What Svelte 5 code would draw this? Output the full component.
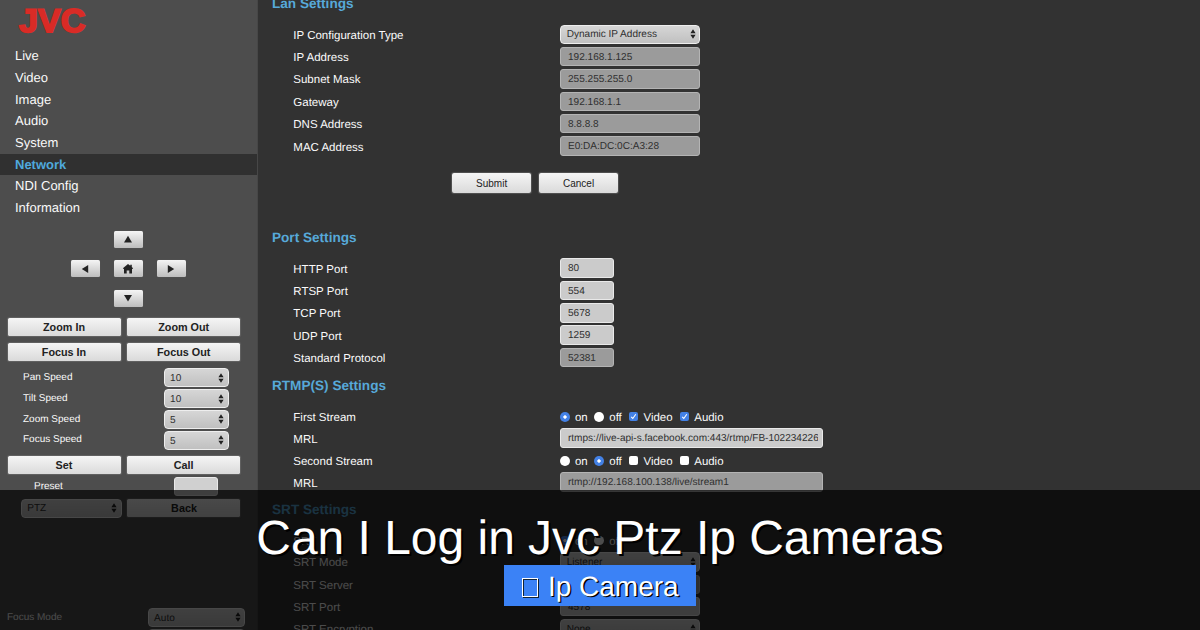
<script>
  const nav = ['Live', 'Video', 'Image', 'Audio', 'System', 'Network', 'NDI Config', 'Information'];
  const speeds = [['Pan Speed', '10'], ['Tilt Speed', '10'], ['Zoom Speed', '5'], ['Focus Speed', '5']];
  const lan = [
    ['IP Address', '192.168.1.125'],
    ['Subnet Mask', '255.255.255.0'],
    ['Gateway', '192.168.1.1'],
    ['DNS Address', '8.8.8.8'],
    ['MAC Address', 'E0:DA:DC:0C:A3:28']
  ];
  const ports = [['HTTP Port', '80'], ['RTSP Port', '554'], ['TCP Port', '5678'], ['UDP Port', '1259'], ['Standard Protocol', '52381']];
  const streams = [
    { name: 'First Stream', on: true, url: 'rtmps://live-api-s.facebook.com:443/rtmp/FB-1022342267' },
    { name: 'Second Stream', on: false, url: 'rtmp://192.168.100.138/live/stream1' }
  ];
</script>

{#snippet select(text, cls)}
  <div class="field select {cls}">
    <span>{text}</span>
    <svg width="6" height="10" viewBox="0 0 6 10"><path d="M3 .2 5.6 4.2H.4zM3 9.8.4 5.8h5.2z" fill="#222" /></svg>
  </div>
{/snippet}

{#snippet radio(on)}
  <i class="radio" class:on></i>
{/snippet}

{#snippet check(on)}
  <i class="check" class:on>
    {#if on}<svg width="9" height="9" viewBox="0 0 9 9"><path d="M2.2 4.8 3.8 6.5 6.8 2.3" fill="none" stroke="#fff" stroke-width="1.1" /></svg>{/if}
  </i>
{/snippet}

<div class="page">
  <aside>
    <div class="logo">
      <svg width="90" height="45" viewBox="0 0 90 45">
        <text x="19" y="32.4" textLength="66.5" lengthAdjust="spacingAndGlyphs">JVC</text>
      </svg>
    </div>
    <nav>
      {#each nav as item}
        <div class="item" class:active={item === 'Network'}>{item}</div>
      {/each}
    </nav>

    <div class="pad">
      <button class="up"><svg viewBox="0 0 10 8"><path d="M5 .8 9 7.4H1z" /></svg></button>
      <button class="left"><svg viewBox="0 0 10 8"><path d="M1.8 4 8.2 0v8z" /></svg></button>
      <button class="home"><svg class="house" viewBox="0 0 12 11"><path d="M6 .9 8.3 2.8V1.7h1.5v2.4l1.3 1.2-.6.7-.5-.3v4.9H7.3V7.4H4.7v3.2H2V5.7l-.5.3-.6-.7z" /></svg></button>
      <button class="right"><svg viewBox="0 0 10 8"><path d="M8.2 4 1.8 0v8z" /></svg></button>
      <button class="down"><svg viewBox="0 0 10 8"><path d="M5 7.6 9 1H1z" /></svg></button>
    </div>

    <div class="pairs">
      <button>Zoom In</button><button>Zoom Out</button>
      <button>Focus In</button><button>Focus Out</button>
    </div>

    <div class="speeds">
      {#each speeds as [label, value]}
        <div class="speed"><span>{label}</span>{@render select(value, 'small')}</div>
      {/each}
    </div>

    <div class="pairs set"><button>Set</button><button>Call</button></div>
    <div class="preset"><span>Preset</span><div class="field"></div></div>
    <div class="back">{@render select('PTZ', 'ptz')}<button>Back</button></div>
    <div class="mode"><span>Focus Mode</span>{@render select('Auto', 'auto')}</div>
    <div class="mode next"><span></span>{@render select('', 'auto')}</div>
  </aside>

  <main>
    <h2 class="lan">Lan Settings</h2>
    <div class="row"><label>IP Configuration Type</label>{@render select('Dynamic IP Address', 'wide')}</div>
    {#each lan as [label, value]}
      <div class="row"><label>{label}</label><div class="field wide off">{value}</div></div>
    {/each}
    <div class="actions"><button>Submit</button><button>Cancel</button></div>

    <h2 class="port">Port Settings</h2>
    {#each ports as [label, value], i}
      <div class="row"><label>{label}</label><div class="field short" class:off={i === 4}>{value}</div></div>
    {/each}

    <h2 class="rtmp">RTMP(S) Settings</h2>
    {#each streams as s}
      <div class="row stream">
        <label>{s.name}</label>
        <div class="opts">
          {@render radio(s.on)}<span class="on-text">on</span>
          {@render radio(!s.on)}<span class="off-text">off</span>
          {@render check(s.on)}<span class="video-text">Video</span>
          {@render check(s.on)}<span>Audio</span>
        </div>
      </div>
      <div class="row mrl"><label>MRL</label><div class="field url" class:off={!s.on}><span>{s.url}</span></div></div>
    {/each}

    <h2 class="srt">SRT Settings</h2>
    <div class="row srt-on">
      <label>SRT</label>
      <div class="opts">{@render radio(true)}<span class="on-text">on</span>{@render radio(false)}<span>off</span></div>
    </div>
    <div class="row"><label>SRT Mode</label>{@render select('Listener', 'wide')}</div>
    <div class="row"><label>SRT Server</label><div class="field wide off"></div></div>
    <div class="row"><label>SRT Port</label><div class="field wide">4578</div></div>
    <div class="row"><label>SRT Encryption</label>{@render select('None', 'wide')}</div>
  </main>

  <section class="overlay">
    <h1>Can I Log in Jvc Ptz Ip Cameras</h1>
    <div class="badge"><i></i><span>Ip Camera</span></div>
  </section>
</div>

<style>
  :global(body) { background: #323232; overflow: hidden; }
  .page {
    position: relative; display: flex; width: 1200px; height: 630px; overflow: hidden;
    background: #323232; color: #fafafa; font-family: "Liberation Sans", Arial, sans-serif;
    text-rendering: geometricPrecision;
  }
  .page * { box-sizing: border-box; }
  aside { width: 257.5px; height: 630px; flex: none; background: #4d4d4d; border-right: 1px solid #474747; overflow: hidden; }
  .logo { height: 45.4px; }
  .logo svg { display: block; }
  .logo text { font: bold 33px "Liberation Sans", Arial, sans-serif; fill: #d92b26; stroke: #d92b26; stroke-width: 1.8px; }
  .item { height: 21.65px; padding-left: 15px; font-size: 13px; line-height: 22px; }
  .item.active { background: #303030; color: #4fa9dd; font-weight: bold; margin-right: -1px; }

  button {
    display: flex; align-items: center; justify-content: center; padding: 0; border: 0; border-radius: 1.5px;
    background: linear-gradient(#f5f5f5, #dadada); color: #222; font-family: inherit;
    box-shadow: 0 0 1px 1px rgba(125, 125, 125, .45);
  }
  .pad {
    display: grid; grid-template-columns: repeat(3, 28.6px); grid-template-rows: repeat(3, 17px);
    gap: 12.5px 14.5px; margin: 12.4px 0 0 71px;
  }
  .pad button { background: linear-gradient(#f5f5f5, #bdbdbd); box-shadow: 0 0 1px rgba(125, 125, 125, .5); }
  .pad svg { width: 10px; height: 8px; fill: #222; }
  .pad .house { width: 12px; height: 11px; }
  .up, .down { grid-column: 2; }
  .left { grid-column: 1; }
  .pairs { display: grid; grid-template-columns: 113px 113px; gap: 7px 6.7px; margin: 11.5px 0 0 7.5px; }
  .pairs button, .back button { height: 18px; font-size: 10.8px; font-weight: bold; }

  .field {
    height: 19.4px; padding: 0 6.9px; border: 1px solid #e9e9e9; border-radius: 3px; background: #cbcbcb;
    color: #303030; font-size: 10.05px; line-height: 19.6px; white-space: nowrap; overflow: hidden;
  }
  .field.off { background: #9b9b9b; border-color: #b4b4b4; }
  .select {
    display: flex; align-items: center; justify-content: space-between; padding: 0 3.5px 0 5.6px;
    border: 1.5px solid #eee; border-radius: 4px; background: linear-gradient(#d6d6d6, #c0c0c0);
  }
  .select span { position: relative; top: 1px; }
  .speeds { margin-top: 5.8px; font-size: 10px; }
  .speed { display: flex; justify-content: space-between; align-items: center; height: 20.9px; padding: 0 28px 0 23px; }
  .speed > span { position: relative; top: -.4px; }
  .small { width: 65px; }
  .pairs.set { margin-top: 5px; }
  .preset { display: flex; justify-content: space-between; height: 20px; margin: 2.8px 39px 0 34px; font-size: 10px; line-height: 19px; }
  .preset .field { width: 44px; background: #d0d0d0; }
  .back { display: flex; gap: 5.5px; align-items: center; margin: 2px 0 0 20.6px; }
  .back button { width: 113px; }
  .back :global(.ptz) { width: 101.4px; }
  .mode { display: flex; justify-content: space-between; align-items: center; height: 21px; margin: 88.9px 11.5px 0 7px; font-size: 10px; }
  .auto { width: 97.5px; }
  .mode.next { margin-top: 0; }

  main { flex: 1; padding-left: 14.5px; overflow: hidden; }
  h2 { margin: 0; height: 20px; color: #57a9d9; font-size: 13.6px; line-height: 20px; font-weight: bold; }
  .lan { margin-top: -6.2px; margin-bottom: 9.3px; }
  .row { display: grid; grid-template-columns: 266.8px auto; justify-content: start; align-items: center; height: 22.35px; margin-left: 21.3px; }
  .row label { position: relative; top: 1.5px; font-size: 11.5px; }
  .wide { width: 140.4px; }
  .short { width: 54px; }
  .url { width: 263px; padding: 0 4px 0 6.9px; }
  .url span { display: block; overflow: hidden; }
  .actions { display: flex; gap: 7.8px; margin: 15.6px 0 0 180px; }
  .actions button { width: 79.2px; height: 20.6px; border-radius: 2px; font-size: 10px; }
  .port { margin-top: 34.8px; margin-bottom: 8.8px; }
  .rtmp { margin-top: 7.2px; margin-bottom: 9.9px; }
  .stream, .mrl { height: 22px; }
  .mrl { padding-bottom: 1.2px; }
  .opts { display: flex; align-items: center; font-size: 11.45px; }
  .opts span { position: relative; top: 1px; }
  .radio { width: 9.8px; height: 9.8px; margin-right: 5px; border-radius: 50%; background: #fff; }
  .radio.on { background: radial-gradient(circle, #fff 0 1.4px, #4381e6 1.9px); }
  .check { display: block; width: 9px; height: 9px; margin-right: 5px; border-radius: 2px; background: #fff; }
  .check svg { display: block; width: 9px; height: 9px; }
  .check.on { background: #4381e6; }
  .on-text { width: 19.6px; }
  .off-text { width: 20.2px; }
  .video-text { width: 36.8px; }
  .srt { margin-top: 6px; margin-bottom: 10.6px; }
  .srt-on { height: 20.4px; }

  .overlay {
    position: absolute; left: 0; right: 0; bottom: 0; height: 140px; background: rgba(0, 0, 0, .7);
    display: flex; flex-direction: column; align-items: center; text-shadow: 2px 2px 0 #000; color: #fff;
  }
  h1 { margin: 21px 0 0; font-size: 47.95px; height: 54px; line-height: 56px; font-weight: normal; white-space: nowrap; }
  .badge { display: flex; width: 192px; height: 41px; padding-left: 17.5px; background: #3b82f6; font-size: 28px; line-height: 43px; text-shadow: 1.4px 1.4px 0 #000; }
  .badge i { width: 16px; height: 19px; margin: 12.5px 10.4px 0 0; border: 1px solid #fff; box-shadow: 1px 1px 0 #123, inset 1px 1px 0 #123; }
</style>
